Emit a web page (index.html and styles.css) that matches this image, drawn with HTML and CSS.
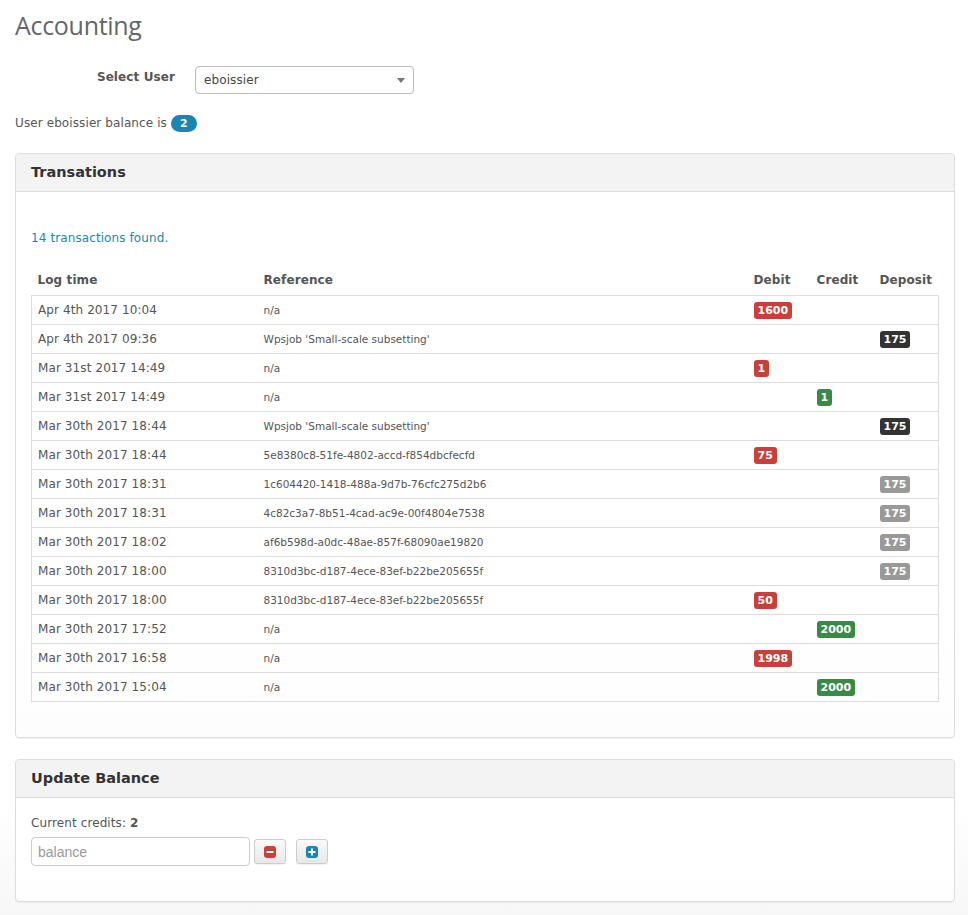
FILE: index.html
```html
<!DOCTYPE html>
<html>
<head>
<meta charset="utf-8">
<title>Accounting</title>
<link rel="stylesheet" href="styles.css">
</head>
<body>
<div class="page">
  <h1 class="title">Accounting</h1>
  <div class="select-row">
    <label class="select-label">Select User</label>
    <div class="select-box">
      <span>eboissier</span>
      <span class="caret"></span>
    </div>
  </div>
  <p class="balance-line">User eboissier balance is <span class="pill">2</span></p>

  <section class="panel">
    <div class="panel-heading">Transations</div>
    <div class="panel-body tx-body">
      <p class="found">14 transactions found.</p>
      <table class="tx">
        <thead>
          <tr><th class="c-time">Log time</th><th class="c-ref">Reference</th><th class="c-debit">Debit</th><th class="c-credit">Credit</th><th class="c-dep">Deposit</th></tr>
        </thead>
        <tbody>
          <tr><td>Apr 4th 2017 10:04</td><td class="ref">n/a</td><td><span class="lbl red">1600</span></td><td></td><td></td></tr>
          <tr><td>Apr 4th 2017 09:36</td><td class="ref">Wpsjob 'Small-scale subsetting'</td><td></td><td></td><td><span class="lbl dark">175</span></td></tr>
          <tr><td>Mar 31st 2017 14:49</td><td class="ref">n/a</td><td><span class="lbl red">1</span></td><td></td><td></td></tr>
          <tr><td>Mar 31st 2017 14:49</td><td class="ref">n/a</td><td></td><td><span class="lbl green">1</span></td><td></td></tr>
          <tr><td>Mar 30th 2017 18:44</td><td class="ref">Wpsjob 'Small-scale subsetting'</td><td></td><td></td><td><span class="lbl dark">175</span></td></tr>
          <tr><td>Mar 30th 2017 18:44</td><td class="ref">5e8380c8-51fe-4802-accd-f854dbcfecfd</td><td><span class="lbl red">75</span></td><td></td><td></td></tr>
          <tr><td>Mar 30th 2017 18:31</td><td class="ref">1c604420-1418-488a-9d7b-76cfc275d2b6</td><td></td><td></td><td><span class="lbl gray">175</span></td></tr>
          <tr><td>Mar 30th 2017 18:31</td><td class="ref">4c82c3a7-8b51-4cad-ac9e-00f4804e7538</td><td></td><td></td><td><span class="lbl gray">175</span></td></tr>
          <tr><td>Mar 30th 2017 18:02</td><td class="ref">af6b598d-a0dc-48ae-857f-68090ae19820</td><td></td><td></td><td><span class="lbl gray">175</span></td></tr>
          <tr><td>Mar 30th 2017 18:00</td><td class="ref">8310d3bc-d187-4ece-83ef-b22be205655f</td><td></td><td></td><td><span class="lbl gray">175</span></td></tr>
          <tr><td>Mar 30th 2017 18:00</td><td class="ref">8310d3bc-d187-4ece-83ef-b22be205655f</td><td><span class="lbl red">50</span></td><td></td><td></td></tr>
          <tr><td>Mar 30th 2017 17:52</td><td class="ref">n/a</td><td></td><td><span class="lbl green">2000</span></td><td></td></tr>
          <tr><td>Mar 30th 2017 16:58</td><td class="ref">n/a</td><td><span class="lbl red">1998</span></td><td></td><td></td></tr>
          <tr><td>Mar 30th 2017 15:04</td><td class="ref">n/a</td><td></td><td><span class="lbl green">2000</span></td><td></td></tr>
        </tbody>
      </table>
    </div>
  </section>

  <section class="panel">
    <div class="panel-heading">Update Balance</div>
    <div class="panel-body upd-body">
      <p class="credits">Current credits: <b>2</b></p>
      <div class="upd-row">
        <input class="bal-input" type="text" placeholder="balance">
        <button class="btn" type="button" aria-label="remove">
          <svg width="12" height="12" viewBox="0 0 12 12"><rect x="0" y="0" width="12" height="12" rx="3" fill="#c9403b"/><rect x="2.5" y="5" width="7" height="2" fill="#fff"/></svg>
        </button>
        <button class="btn" type="button" aria-label="add">
          <svg width="12" height="12" viewBox="0 0 12 12"><rect x="0" y="0" width="12" height="12" rx="3" fill="#1b87b0"/><rect x="2.5" y="5" width="7" height="2" fill="#fff"/><rect x="5" y="2.5" width="2" height="7" fill="#fff"/></svg>
        </button>
      </div>
    </div>
  </section>
</div>
</body>
</html>
```

FILE: styles.css
```css
html, body {
  margin: 0;
  padding: 0;
}
body {
  font-family: "DejaVu Sans", Verdana, sans-serif;
  font-size: 12px;
  letter-spacing: 0.1px;
  color: #555;
  background: linear-gradient(to bottom, #ffffff 88%, #f7f7f7 100%);
  min-height: 915px;
}
.page {
  padding: 0 13px 0 15px;
}
.title {
  margin: 0;
  padding-top: 9px;
  font-family: "Open Sans", "DejaVu Sans", sans-serif;
  font-weight: 400;
  font-size: 25px;
  line-height: 32px;
  color: #666;
  letter-spacing: -0.3px;
}
.select-row {
  display: flex;
  align-items: center;
  margin-top: 25px;
}
.select-label {
  width: 160px;
  text-align: right;
  font-weight: bold;
  font-size: 12px;
  color: #555;
  padding-bottom: 6px;
}
.select-box {
  margin-left: 20px;
  width: 201px;
  height: 26px;
  border: 1px solid #bbb;
  border-radius: 4px;
  display: flex;
  align-items: center;
  justify-content: space-between;
  padding: 0 8px 0 8px;
  font-size: 12px;
  color: #444;
}
.caret {
  width: 0;
  height: 0;
  border-left: 4px solid transparent;
  border-right: 4px solid transparent;
  border-top: 5px solid #777;
  margin-top: 1px;
}
.balance-line {
  margin: 19px 0 0;
  font-size: 12px;
  line-height: 20px;
  color: #555;
}
.pill {
  display: inline-block;
  background: #1b87b0;
  color: #fff;
  font-weight: bold;
  font-size: 11px;
  line-height: 17px;
  padding: 0 9px;
  border-radius: 9px;
  vertical-align: 0;
}
.panel {
  border: 1px solid #ddd;
  border-radius: 4px;
  background: linear-gradient(to bottom, #fff 80%, #fdfdfd);
  box-shadow: 0 1px 1px rgba(0,0,0,0.05);
  margin-top: 20px;
}
.panel + .panel {
  margin-top: 21px;
}
.panel-heading {
  background: #f3f3f3;
  border-bottom: 1px solid #ddd;
  border-radius: 4px 4px 0 0;
  height: 37px;
  line-height: 37px;
  padding: 0 15px;
  font-weight: bold;
  font-size: 14.5px;
  letter-spacing: 0;
  color: #333;
}
.tx-body {
  padding: 36px 15px 35px;
}
.found {
  margin: 0 0 17px;
  color: #1f86ad;
  font-size: 12px;
  line-height: 20px;
}
.tx {
  width: 100%;
  border-collapse: collapse;
}
.tx th {
  text-align: left;
  font-weight: bold;
  font-size: 12px;
  color: #555;
  height: 30px;
  padding: 0 6px;
  vertical-align: middle;
  border-bottom: 1px solid #ddd;
}
.tx td {
  height: 28px;
  padding: 0 6px;
  border-bottom: 1px solid #ddd;
  font-size: 12px;
  color: #555;
  vertical-align: middle;
}
.tx td:first-child { border-left: 1px solid #ddd; }
.tx td:last-child { border-right: 1px solid #ddd; }
.tx td.ref {
  font-size: 10.5px;
  letter-spacing: 0;
}
.c-time { width: 214px; }
.c-debit { width: 51px; }
.c-credit { width: 51px; }
.c-dep { width: 53px; }
.lbl {
  display: inline-block;
  color: #fff;
  font-weight: bold;
  font-size: 11px;
  letter-spacing: 0;
  line-height: 17px;
  padding: 0 4px;
  border-radius: 3px;
}
.red { background: #c9403b; }
.green { background: #3a8a47; }
.dark { background: #333; }
.gray { background: #999; }
.upd-body {
  padding: 17px 15px 35px;
}
.credits {
  margin: 0 0 6px;
  font-size: 12px;
  line-height: 16px;
}
.credits b { color: #555; }
.upd-row {
  display: flex;
  align-items: center;
}
.bal-input {
  width: 219px;
  height: 29px;
  box-sizing: border-box;
  border: 1px solid #ccc;
  border-radius: 4px;
  padding: 0 6px;
  font-family: "Liberation Sans", Arial, sans-serif;
  font-size: 14px;
  color: #555;
  outline: none;
}
.bal-input::placeholder { color: #999; }
.btn {
  margin-left: 4px;
  width: 32px;
  height: 25px;
  box-sizing: border-box;
  border: 1px solid #ccc;
  border-radius: 3px;
  background: linear-gradient(to bottom, #fafafa, #e8e8e8);
  display: flex;
  align-items: center;
  justify-content: center;
  padding: 0;
  box-shadow: 0 1px 1px rgba(0,0,0,0.06);
}
.btn + .btn { margin-left: 10px; }
```
